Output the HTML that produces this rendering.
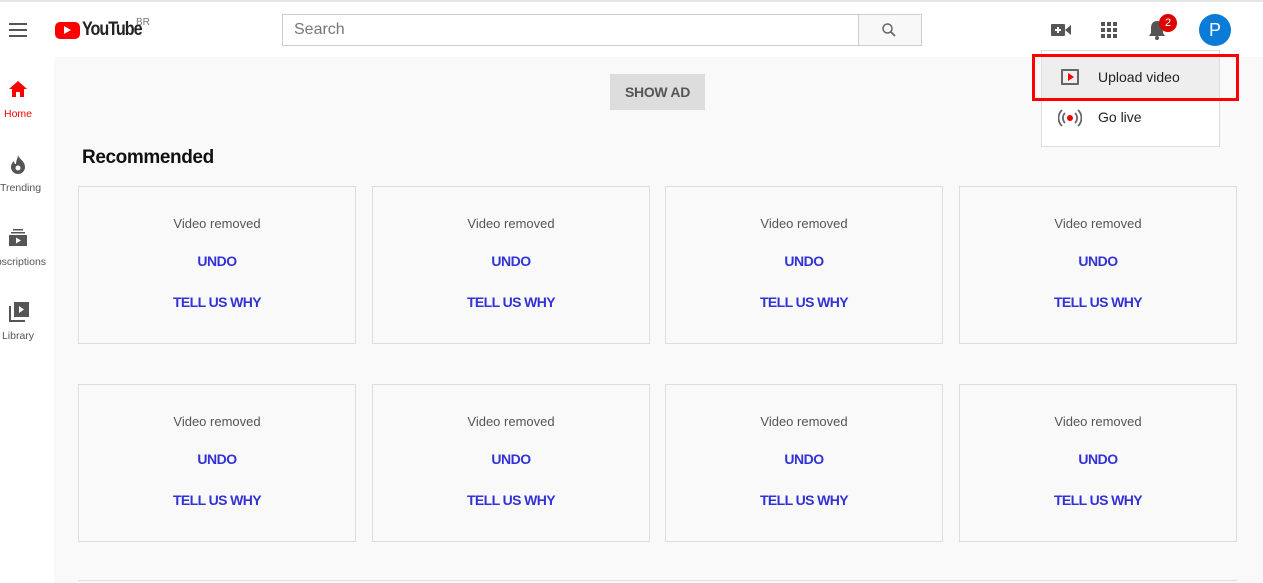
<!DOCTYPE html>
<html><head><style>
*{margin:0;padding:0;box-sizing:border-box}
body{width:1263px;height:583px;overflow:hidden;background:#fff;font-family:"Liberation Sans",Arial,sans-serif;position:relative}
.a{position:absolute}
.card{position:absolute;width:278px;height:158px;border:1px solid #ddd;background:#f9f9f9;text-align:center}
.card .t{position:absolute;top:29px;width:100%;font-size:13px;color:#555}
.card .u{position:absolute;top:66px;width:100%;font-size:14px;color:#3232d6;font-weight:bold;letter-spacing:-.5px}
.card .w{position:absolute;top:107px;width:100%;font-size:14px;color:#3232d6;font-weight:bold;letter-spacing:-.6px}
.nav{position:absolute;left:0;width:36px;text-align:center;font-size:10.5px;color:#555}
</style></head><body>
<div class="a" style="left:0;top:0;width:1263px;height:2px;background:#e5e5e5"></div>
<div class="a" style="left:54px;top:57px;width:1209px;height:526px;background:#f9f9f9"></div>
<div class="a" style="left:9px;top:23px;width:18px;height:2px;background:#555;box-shadow:0 6px 0 #555,0 12px 0 #555"></div>
<div class="a" style="left:55px;top:22px;width:25px;height:17px;background:#f00;border-radius:5px"></div>
<div class="a" style="left:64px;top:26px;width:0;height:0;border-left:7px solid #fff;border-top:4.5px solid transparent;border-bottom:4.5px solid transparent"></div>
<div class="a" style="left:82px;top:19px;font-size:19px;font-weight:bold;letter-spacing:-1.2px;color:#222;transform:scaleX(.85);transform-origin:left">YouTube</div>
<div class="a" style="left:136px;top:17px;font-size:10px;color:#777">BR</div>
<div class="a" style="left:282px;top:14px;width:577px;height:32px;border:1px solid #ccc;font-size:16px;color:#777;padding:6px 11px">Search</div>
<div class="a" style="left:858px;top:14px;width:64px;height:32px;border:1px solid #ccc;background:#f8f8f8"></div>
<svg class="a" style="left:880px;top:21px" width="18" height="18" viewBox="0 0 24 24"><circle cx="10" cy="10" r="6" fill="none" stroke="#666" stroke-width="2"/><path d="M14.5 14.5 20 20" stroke="#666" stroke-width="2.4"/></svg>
<svg class="a" style="left:1050px;top:20px" width="22" height="20" viewBox="0 0 22 20"><rect x="1" y="4" width="14" height="12" rx="1" fill="#555"/><path d="M15 10 21 5v10z" fill="#555"/><path d="M8 7v6M5 10h6" stroke="#fff" stroke-width="2"/></svg>
<svg class="a" style="left:1100px;top:21px" width="18" height="18" viewBox="0 0 18 18" fill="#555"><rect x="1" y="1" width="4" height="4"/><rect x="7" y="1" width="4" height="4"/><rect x="13" y="1" width="4" height="4"/><rect x="1" y="7" width="4" height="4"/><rect x="7" y="7" width="4" height="4"/><rect x="13" y="7" width="4" height="4"/><rect x="1" y="13" width="4" height="4"/><rect x="7" y="13" width="4" height="4"/><rect x="13" y="13" width="4" height="4"/></svg>
<svg class="a" style="left:1147px;top:19px" width="20" height="22" viewBox="0 0 20 22"><path d="M10 2c-4 0-6 3-6 7v5l-2 3h16l-2-3V9c0-4-2-7-6-7z" fill="#555"/><circle cx="10" cy="19" r="2" fill="#555"/></svg>
<div class="a" style="left:1159px;top:14px;width:18px;height:18px;border-radius:50%;background:#d00;color:#fff;font-size:11px;text-align:center;line-height:18px">2</div>
<div class="a" style="left:1199px;top:14px;width:32px;height:32px;border-radius:50%;background:#0a7bd6;color:#fff;font-size:18px;text-align:center;line-height:32px">P</div>
<svg class="a" style="left:8px;top:80px" width="20" height="18" viewBox="0 0 20 18"><path d="M10 1 1 9h3v8h4v-5h4v5h4V9h3z" fill="#f00"/></svg>
<div class="nav" style="top:108px;color:#f00">Home</div>
<svg class="a" style="left:10px;top:154px" width="16" height="20" viewBox="0 0 16 20"><path d="M8 1c1 4 7 6 7 12a7 7 0 0 1-14 0c0-3 2-5 3-6 0 2 1 3 2 3 0-4 2-6 2-9z" fill="#555"/><circle cx="8" cy="14" r="2.5" fill="#fff"/></svg>
<div class="nav" style="top:182px">Trending</div>
<svg class="a" style="left:9px;top:228px" width="18" height="20" viewBox="0 0 18 20"><rect x="4" y="1" width="10" height="1.5" fill="#555"/><rect x="2" y="4" width="14" height="1.5" fill="#555"/><rect x="0" y="7" width="18" height="11" fill="#555"/><path d="M7 9.5v6l5-3z" fill="#fff"/></svg>
<div class="nav" style="top:256px;left:-10px;width:56px">ubscriptions</div>
<svg class="a" style="left:8px;top:301px" width="22" height="22" viewBox="0 0 22 22"><path d="M2 5v15h15" stroke="#555" stroke-width="2" fill="none"/><rect x="6" y="1" width="15" height="15" fill="#555"/><path d="M11 5v7l5-3.5z" fill="#fff"/></svg>
<div class="nav" style="top:330px">Library</div>
<div class="a" style="left:610px;top:74px;width:95px;height:36px;background:#ddd;color:#555;font-size:14px;font-weight:bold;text-align:center;line-height:36px;letter-spacing:-.3px">SHOW AD</div>
<div class="a" style="left:82px;top:147px;font-size:19px;color:#111;font-weight:bold;letter-spacing:-.4px">Recommended</div>
<div class="card" style="left:78px;top:186px"><div class="t">Video removed</div><div class="u">UNDO</div><div class="w">TELL US WHY</div></div>
<div class="card" style="left:372px;top:186px"><div class="t">Video removed</div><div class="u">UNDO</div><div class="w">TELL US WHY</div></div>
<div class="card" style="left:665px;top:186px"><div class="t">Video removed</div><div class="u">UNDO</div><div class="w">TELL US WHY</div></div>
<div class="card" style="left:959px;top:186px"><div class="t">Video removed</div><div class="u">UNDO</div><div class="w">TELL US WHY</div></div>
<div class="card" style="left:78px;top:384px"><div class="t">Video removed</div><div class="u">UNDO</div><div class="w">TELL US WHY</div></div>
<div class="card" style="left:372px;top:384px"><div class="t">Video removed</div><div class="u">UNDO</div><div class="w">TELL US WHY</div></div>
<div class="card" style="left:665px;top:384px"><div class="t">Video removed</div><div class="u">UNDO</div><div class="w">TELL US WHY</div></div>
<div class="card" style="left:959px;top:384px"><div class="t">Video removed</div><div class="u">UNDO</div><div class="w">TELL US WHY</div></div>
<div class="a" style="left:78px;top:580px;width:1159px;height:1px;background:#ddd"></div>
<div class="a" style="left:1041px;top:50px;width:179px;height:97px;background:#fff;border:1px solid #ddd"></div>
<div class="a" style="left:1042px;top:57px;width:177px;height:42px;background:#eee"></div>
<div class="a" style="left:1032px;top:54px;width:207px;height:47px;border:3px solid #f00"></div>
<div class="a" style="left:1061px;top:69px;width:18px;height:16px;border:2px solid #666;border-radius:1px"></div>
<div class="a" style="left:1068px;top:73px;width:0;height:0;border-left:6px solid #f00;border-top:4px solid transparent;border-bottom:4px solid transparent"></div>
<div class="a" style="left:1098px;top:69px;font-size:14px;color:#222">Upload video</div>
<svg class="a" style="left:1058px;top:109px" width="24" height="18" viewBox="0 0 24 18"><circle cx="12" cy="9" r="3" fill="#e00"/><path d="M7 4a7 7 0 0 0 0 10M17 4a7 7 0 0 1 0 10M4 1a11 11 0 0 0 0 16M20 1a11 11 0 0 1 0 16" stroke="#666" stroke-width="1.8" fill="none"/></svg>
<div class="a" style="left:1098px;top:109px;font-size:14px;color:#222">Go live</div>
</body></html>
